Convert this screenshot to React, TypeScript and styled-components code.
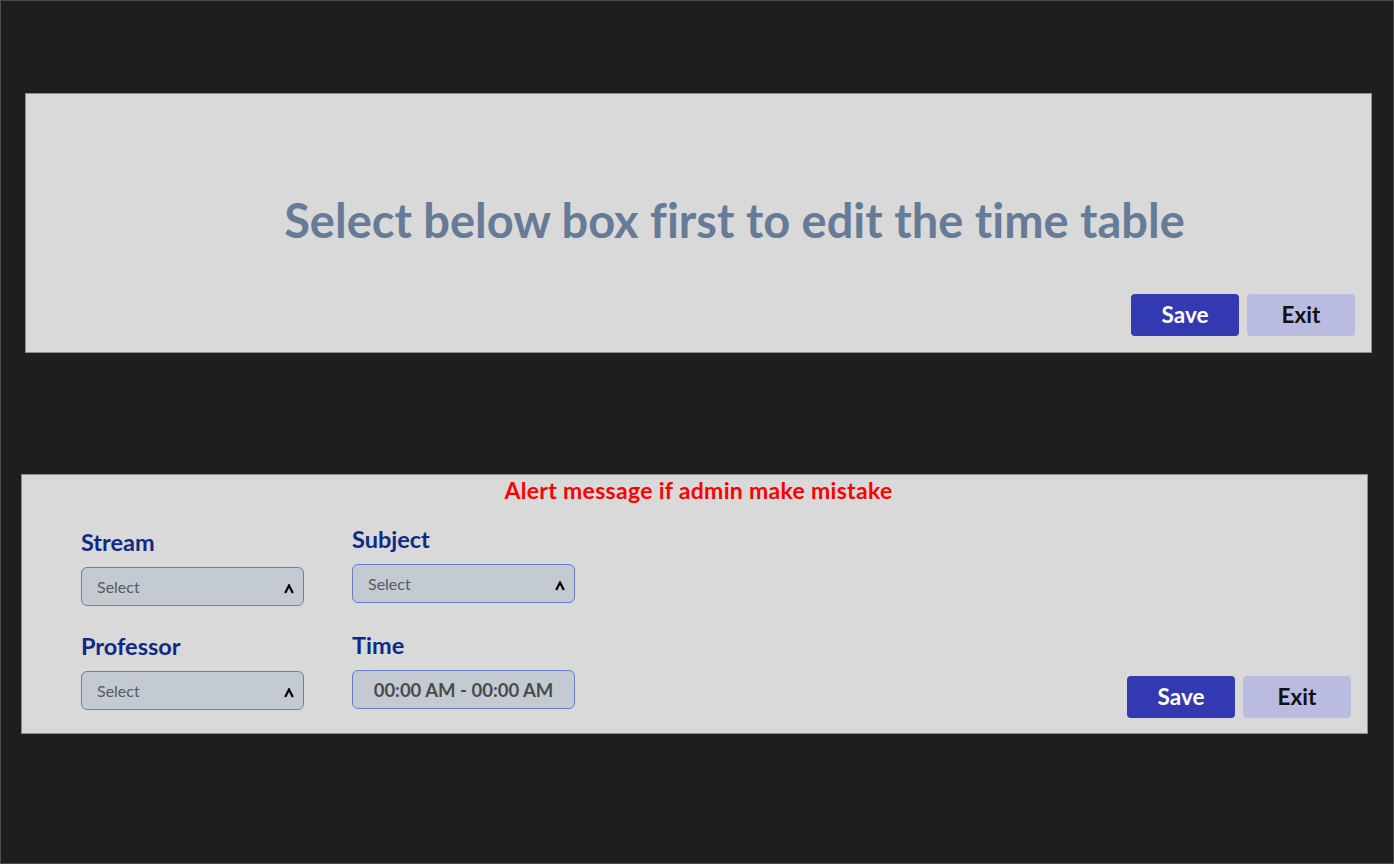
import React from "react";
import styled, { createGlobalStyle } from "styled-components";

const Global = createGlobalStyle`
  html, body { margin: 0; padding: 0; background: #1e1e1e; }
  * { box-sizing: border-box; }
  body {
    font-family: Lato, "Noto Sans", sans-serif;
    font-variant-ligatures: none;
  }
`;

const Frame = styled.div`
  width: 1394px;
  height: 864px;
  border: 1px solid #4b4b4b;
  background: #1e1e1e;
  display: flex;
  flex-direction: column;
`;

const Panel = styled.section<{ $left: number; $top: number }>`
  width: 1347px;
  height: 260px;
  margin-left: ${(p) => p.$left}px;
  margin-top: ${(p) => p.$top}px;
  background: #d9d9d9;
  border: 1px solid #8c8c8c;
  display: flex;
  flex-direction: column;
`;

const Title = styled.h1`
  margin: 0;
  padding: 100px 0 0 72px;
  height: 200px;
  text-align: center;
  font-size: 47px;
  font-weight: 700;
  line-height: 52px;
  color: #667b97;
  white-space: nowrap;
`;

const ButtonRow = styled.div`
  display: flex;
  gap: 8px;
  justify-content: flex-end;
`;

const TopButtons = styled(ButtonRow)`
  padding-right: 16px;
`;

const Button = styled.button<{ $primary?: boolean }>`
  width: 108px;
  height: 42px;
  border: none;
  border-radius: 4px;
  font-family: Lato, "Noto Sans", sans-serif;
  font-variant-ligatures: none;
  font-size: 22.5px;
  font-weight: 700;
  line-height: 40px;
  background: ${(p) => (p.$primary ? "#3339b1" : "#b9bbe1")};
  color: ${(p) => (p.$primary ? "#ffffff" : "#111111")};
  padding: 0;
`;

const Alert = styled.div`
  height: 28px;
  text-align: center;
  font-size: 23px;
  font-weight: 700;
  letter-spacing: 0.3px;
  line-height: 30px;
  color: #ff0000;
  padding-left: 8px;
  white-space: nowrap;
`;

const Body = styled.div`
  flex: 1;
  display: flex;
  justify-content: space-between;
  align-items: flex-end;
  padding: 0 16px 15px 59px;
`;

const Form = styled.div`
  display: flex;
  align-items: flex-start;
  gap: 48px;
  margin-bottom: 8px;
`;

const Column = styled.div<{ $gap: number; $drop: number }>`
  display: flex;
  flex-direction: column;
  gap: ${(p) => p.$gap}px;
  margin-top: ${(p) => p.$drop}px;
`;

const Field = styled.div`
  display: flex;
  flex-direction: column;
  gap: 11px;
`;

const Label = styled.label`
  font-size: 23.5px;
  font-weight: 700;
  line-height: 28px;
  color: #0f2a86;
  white-space: nowrap;
`;

const Box = styled.div<{ $center?: boolean }>`
  width: 223px;
  height: 39px;
  border: 1px solid #6a7cc5;
  border-radius: 6px;
  background: #c4cad1;
  display: flex;
  align-items: center;
  justify-content: ${(p) => (p.$center ? "center" : "space-between")};
  padding: 0 9px 0 15px;
`;

const Placeholder = styled.span`
  font-size: 16px;
  color: #575b60;
`;

const TimeText = styled.span`
  font-size: 18.5px;
  font-weight: 700;
  color: #4a4a4a;
  margin-left: -6px;
  white-space: nowrap;
`;

const Caret = () => (
  <svg width="10" height="10" viewBox="0 0 10 10" style={{ marginTop: 5 }}>
    <polyline
      points="1.2,9 5,1.5 8.8,9"
      fill="none"
      stroke="#000"
      strokeWidth="2.2"
      strokeLinejoin="miter"
    />
  </svg>
);

const SelectBox = () => (
  <Box>
    <Placeholder>Select</Placeholder>
    <Caret />
  </Box>
);

export default function App() {
  return (
    <>
      <Global />
      <Frame>
        <Panel $left={24} $top={92}>
          <Title>Select below box first to edit the time table</Title>
          <TopButtons>
            <Button $primary>Save</Button>
            <Button>Exit</Button>
          </TopButtons>
        </Panel>
        <Panel $left={20} $top={121}>
          <Alert>Alert message if admin make mistake</Alert>
          <Body>
            <Form>
              <Column $gap={26} $drop={3}>
                <Field>
                  <Label>Stream</Label>
                  <SelectBox />
                </Field>
                <Field>
                  <Label>Professor</Label>
                  <SelectBox />
                </Field>
              </Column>
              <Column $gap={28} $drop={0}>
                <Field>
                  <Label>Subject</Label>
                  <SelectBox />
                </Field>
                <Field>
                  <Label>Time</Label>
                  <Box $center>
                    <TimeText>00:00 AM - 00:00 AM</TimeText>
                  </Box>
                </Field>
              </Column>
            </Form>
            <ButtonRow>
              <Button $primary>Save</Button>
              <Button>Exit</Button>
            </ButtonRow>
          </Body>
        </Panel>
      </Frame>
    </>
  );
}
